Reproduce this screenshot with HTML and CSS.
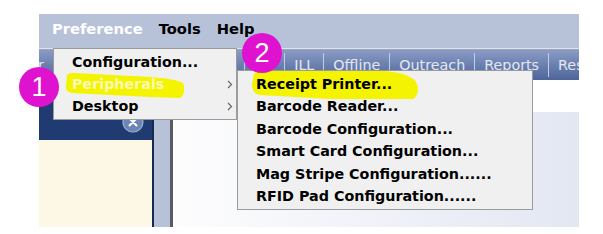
FILE: index.html
```html
<!DOCTYPE html>
<html lang="en">
<head>
<meta charset="utf-8">
<title>Preference menu</title>
<link rel="stylesheet" href="styles.css">
</head>
<body>
<div class="app">
  <div class="menubar">
    <span class="menu open">Preference</span>
    <span class="menu">Tools</span>
    <span class="menu">Help</span>
  </div>
  <div class="tabbar">
    <div class="tabs">
      <span class="tab">Repair</span>
      <span class="tab">Circulation</span>
      <span class="tab">Cataloging</span>
      <span class="tab">DB</span>
      <span class="tab">ILL</span>
      <span class="tab">Offline</span>
      <span class="tab">Outreach</span>
      <span class="tab">Reports</span>
      <span class="tab">Reserves</span>
    </div>
  </div>
  <div class="workspace">
    <aside class="sidepanel">
      <div class="side-head">
        <svg class="close-icon" width="22" height="22" viewBox="0 0 22 22">
          <circle cx="11" cy="11" r="10" fill="#6d84b6" stroke="#9fb0d4" stroke-width="1.2"/>
          <path d="M7.5 7.5 L14.5 14.5 M14.5 7.5 L7.5 14.5" stroke="#ffffff" stroke-width="2" stroke-linecap="round"/>
        </svg>
      </div>
      <div class="side-body"></div>
    </aside>
    <div class="splitter"></div>
    <main class="main">
      <div class="main-head"></div>
      <div class="main-body"></div>
    </main>
  </div>

  <div class="dropdown pref-menu">
    <svg class="marker" width="200" height="80" viewBox="0 0 200 80">
      <g transform="translate(-54,-49)">
        <path d="M67,76 C67,73 70,73 75,73 L150,77 C165,78 178,80 183,83 C185,88 185,95 180,98 L150,97 L72,93 C67,92 66,90 66,86 Z" fill="#f4f400"/>
      </g>
    </svg>
    <div class="item">Configuration...</div>
    <div class="item selected">Peripherals<svg class="chev" width="6" height="9" viewBox="0 0 6 9"><polyline points="1,1 4.5,4.5 1,8" fill="none" stroke="#666" stroke-width="1.2"/></svg></div>
    <div class="item">Desktop<svg class="chev" width="6" height="9" viewBox="0 0 6 9"><polyline points="1,1 4.5,4.5 1,8" fill="none" stroke="#666" stroke-width="1.2"/></svg></div>
  </div>

  <div class="dropdown sub-menu">
    <svg class="marker" width="300" height="60" viewBox="0 0 300 60">
      <g transform="translate(-238,-71)">
        <path d="M254,74 C256,71 262,70 270,70 L370,70 C395,71 410,74 416,82 C419,88 419,95 413,99 L330,99 L260,95 C254,94 252,90 252,84 Z" fill="#f4f400"/>
      </g>
    </svg>
    <div class="item">Receipt Printer...</div>
    <div class="item">Barcode Reader...</div>
    <div class="item">Barcode Configuration...</div>
    <div class="item">Smart Card Configuration...</div>
    <div class="item">Mag Stripe Configuration......</div>
    <div class="item">RFID Pad Configuration......</div>
  </div>

  <div class="badge badge-one">1</div>
  <div class="badge badge-two">2</div>
</div>
</body>
</html>
```
FILE: styles.css
```css
html, body {
  margin: 0;
  padding: 0;
  background: #ffffff;
}

body {
  font-family: "DejaVu Sans", Verdana, sans-serif;
}

.app {
  position: relative;
  margin: 14px 0 0 39px;
  width: 540px;
  height: 213px;
  display: flex;
  flex-direction: column;
  background: #ffffff;
}

/* menu bar */
.menubar {
  box-sizing: border-box;
  height: 36px;
  padding: 5px 0 0 13px;
  display: flex;
  gap: 16px;
  background: #b7c2d9;
  border-bottom: 1px solid #9aa4b8;
  box-shadow: inset 0 -1px 0 #dfe4ee;
  font-weight: bold;
  font-size: 14.7px;
  line-height: 20px;
  color: #000000;
}

.menubar .open {
  color: #ffffff;
}

/* tab strip */
.tabbar {
  height: 30px;
  overflow: hidden;
  background: linear-gradient(#8a9bc4, #4d659b);
}

.tabs {
  display: flex;
  margin-left: -51px;
  white-space: nowrap;
}

.tab {
  padding: 0 9px;
  margin: 3px 0;
  height: 24px;
  line-height: 24px;
  border-left: 1px solid #c3cde2;
  font-size: 14.3px;
  color: #e3e8f3;
}

/* workspace */
.workspace {
  flex: 1;
  display: flex;
  min-height: 0;
}

.sidepanel {
  width: 113px;
  display: flex;
  flex-direction: column;
}

.side-head {
  box-sizing: border-box;
  height: 60px;
  background: #203b72;
  display: flex;
  justify-content: flex-end;
  align-items: flex-end;
  padding: 0 8px 7px 0;
}

.close-icon {
  display: block;
}

.side-body {
  flex: 1;
  background: #fdf7e6;
}

.splitter {
  width: 16px;
  background: #b7c2d9;
  border-left: 2px solid #18294f;
  border-right: 3px solid #595b60;
}

.main {
  flex: 1;
  display: flex;
  flex-direction: column;
}

.main-head {
  height: 32px;
  background: #ffffff;
}

.main-body {
  flex: 1;
  background: linear-gradient(to right, #fdfdfe, #e3e7f2);
}

/* popup menus */
.dropdown {
  position: absolute;
  box-sizing: border-box;
  background: #f0f0f0;
  border: 1px solid #9b9b9b;
  padding: 2px 0;
  font-weight: bold;
  font-size: 14.3px;
  color: #000000;
}

.pref-menu {
  left: 14px;
  top: 34px;
  width: 184px;
}

.sub-menu {
  left: 198px;
  top: 56px;
  width: 296px;
}

.pref-menu .item {
  height: 22px;
  line-height: 22px;
}

.sub-menu .item {
  height: 22.4px;
  line-height: 22.4px;
}

.item {
  position: relative;
  z-index: 1;
  display: flex;
  align-items: center;
  padding: 0 3px 0 18px;
  white-space: nowrap;
}

.item.selected {
  color: #f9f9b4;
}

.chev {
  margin-left: auto;
}

.marker {
  position: absolute;
  left: 0;
  top: 0;
  z-index: 0;
}

/* callout badges */
.badge {
  position: absolute;
  width: 40px;
  height: 40px;
  border-radius: 50%;
  background: #df12d0;
  color: #ffffff;
  font-family: "Liberation Sans", Arial, sans-serif;
  font-size: 27px;
  line-height: 40px;
  text-align: center;
}

.badge-one {
  left: -20px;
  top: 53px;
}

.badge-two {
  left: 203px;
  top: 19px;
}
```
